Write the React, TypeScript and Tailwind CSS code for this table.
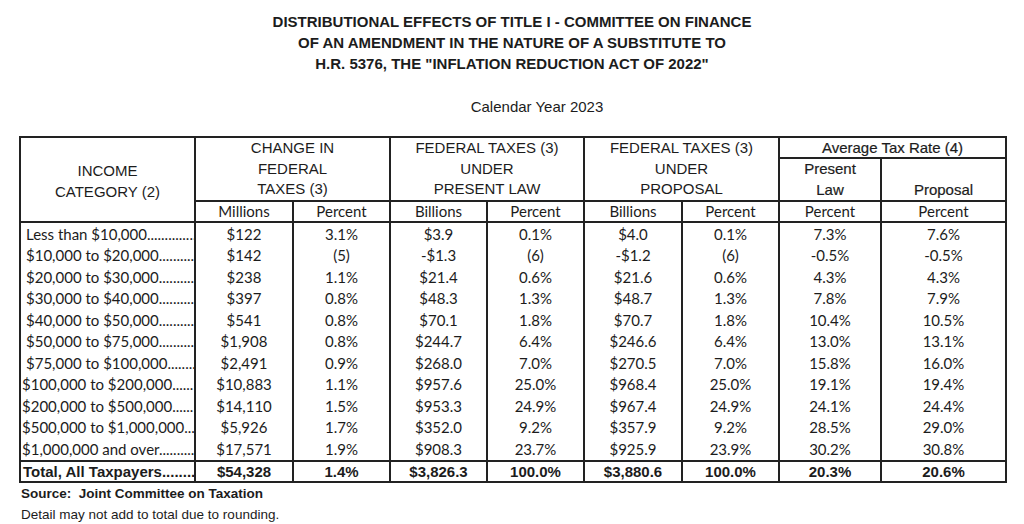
const rows = [
  { label: "Less than $10,000", pad: "pl-[5px]", v: ["$122", "3.1%", "$3.9", "0.1%", "$4.0", "0.1%", "7.3%", "7.6%"] },
  { label: "$10,000 to $20,000", pad: "pl-[5px]", v: ["$142", "(5)", "-$1.3", "(6)", "-$1.2", "(6)", "-0.5%", "-0.5%"] },
  { label: "$20,000 to $30,000", pad: "pl-[5px]", v: ["$238", "1.1%", "$21.4", "0.6%", "$21.6", "0.6%", "4.3%", "4.3%"] },
  { label: "$30,000 to $40,000", pad: "pl-[5px]", v: ["$397", "0.8%", "$48.3", "1.3%", "$48.7", "1.3%", "7.8%", "7.9%"] },
  { label: "$40,000 to $50,000", pad: "pl-[5px]", v: ["$541", "0.8%", "$70.1", "1.8%", "$70.7", "1.8%", "10.4%", "10.5%"] },
  { label: "$50,000 to $75,000", pad: "pl-[5px]", v: ["$1,908", "0.8%", "$244.7", "6.4%", "$246.6", "6.4%", "13.0%", "13.1%"] },
  { label: "$75,000 to $100,000", pad: "pl-[5px]", v: ["$2,491", "0.9%", "$268.0", "7.0%", "$270.5", "7.0%", "15.8%", "16.0%"] },
  { label: "$100,000 to $200,000", pad: "pl-[1px]", v: ["$10,883", "1.1%", "$957.6", "25.0%", "$968.4", "25.0%", "19.1%", "19.4%"] },
  { label: "$200,000 to $500,000", pad: "pl-[1px]", v: ["$14,110", "1.5%", "$953.3", "24.9%", "$967.4", "24.9%", "24.1%", "24.4%"] },
  { label: "$500,000 to $1,000,000", pad: "pl-[1px]", v: ["$5,926", "1.7%", "$352.0", "9.2%", "$357.9", "9.2%", "28.5%", "29.0%"] },
  { label: "$1,000,000 and over", pad: "pl-[1px]", v: ["$17,571", "1.9%", "$908.3", "23.7%", "$925.9", "23.9%", "30.2%", "30.8%"] },
];

const total = ["$54,328", "1.4%", "$3,826.3", "100.0%", "$3,880.6", "100.0%", "20.3%", "20.6%"];

const dots = "..............................";

export default function App() {
  return (
    <div className="w-[1024px] h-[524px] bg-white text-[#1c1c1c] overflow-hidden">
      {/* Title */}
      <div className="pt-[11px] text-center font-['Liberation_Sans',Arial,sans-serif] font-bold text-[15px] leading-[21px]">
        <div>DISTRIBUTIONAL EFFECTS OF TITLE I - COMMITTEE ON FINANCE</div>
        <div>OF AN AMENDMENT IN THE NATURE OF A SUBSTITUTE TO</div>
        <div>H.R. 5376, THE "INFLATION REDUCTION ACT OF 2022"</div>
      </div>
      <div className="mt-[23px] pl-[50px] text-center font-['Liberation_Sans',Arial,sans-serif] text-[15px] leading-[20px]">
        Calendar Year 2023
      </div>

      {/* Table */}
      <table className="mt-[19px] ml-[19px] w-[986px] table-fixed border-collapse border-2 border-[#222] text-[15px]">
        <colgroup>
          <col className="w-[175px]" />
          <col className="w-[98px]" />
          <col className="w-[97px]" />
          <col className="w-[97px]" />
          <col className="w-[97px]" />
          <col className="w-[98px]" />
          <col className="w-[97px]" />
          <col className="w-[102px]" />
          <col className="w-[125px]" />
        </colgroup>
        <thead className="font-['Liberation_Sans',Arial,sans-serif] leading-[20.5px]">
          <tr>
            <td rowSpan={3} className="border-2 border-[#222] text-center align-middle pt-[4px]">
              INCOME
              <br />
              CATEGORY (2)
            </td>
            <td rowSpan={2} colSpan={2} className="border-2 border-[#222] text-center align-top">
              CHANGE IN
              <br />
              FEDERAL
              <br />
              TAXES (3)
            </td>
            <td rowSpan={2} colSpan={2} className="border-2 border-[#222] text-center align-top">
              FEDERAL TAXES (3)
              <br />
              UNDER
              <br />
              PRESENT LAW
            </td>
            <td rowSpan={2} colSpan={2} className="border-2 border-[#222] text-center align-top">
              FEDERAL TAXES (3)
              <br />
              UNDER
              <br />
              PROPOSAL
            </td>
            <td colSpan={2} className="border-2 border-[#222] text-center align-middle leading-[19px] [-webkit-text-stroke:0.2px]">
              Average Tax Rate (4)
            </td>
          </tr>
          <tr>
            <td className="border-2 border-[#222] text-center align-top [-webkit-text-stroke:0.2px]">
              Present
              <br />
              Law
            </td>
            <td className="border-2 border-[#222] text-center align-bottom [-webkit-text-stroke:0.2px]">
              Proposal
            </td>
          </tr>
          <tr className="font-['Lato',sans-serif] leading-[19px]">
            <td className="border-x-2 border-[#222] text-center">Millions</td>
            <td className="border-x-2 border-[#222] text-center">Percent</td>
            <td className="border-x-2 border-[#222] text-center">Billions</td>
            <td className="border-x-2 border-[#222] text-center">Percent</td>
            <td className="border-x-2 border-[#222] text-center">Billions</td>
            <td className="border-x-2 border-[#222] text-center">Percent</td>
            <td className="border-x-2 border-[#222] text-center">Percent</td>
            <td className="border-x-2 border-[#222] text-center">Percent</td>
          </tr>
        </thead>
        <tbody className="font-['Lato',sans-serif]">
          {rows.map((r, i) => (
            <tr
              key={i}
              className={`${i % 2 === 0 ? "h-[22px] leading-[22px]" : "h-[21px] leading-[21px]"} ${i === 0 ? "border-t-2 border-[#222]" : ""}`}
            >
              <td className="border-x-2 border-[#222] p-0">
                <div className={`overflow-hidden whitespace-nowrap ${r.pad}`}>
                  {r.label}
                  {dots}
                </div>
              </td>
              {r.v.map((v, j) => (
                <td key={j} className="border-x-2 border-[#222] text-center p-0">
                  {v}
                </td>
              ))}
            </tr>
          ))}
          <tr className="h-[21px] leading-[19px] border-t-2 border-[#222] font-['Liberation_Sans',Arial,sans-serif] font-bold text-[15px]">
            <td className="border-2 border-[#222] p-0">
              <div className="overflow-hidden whitespace-nowrap pl-[2px]">
                Total, All Taxpayers{dots}
              </div>
            </td>
            {total.map((v, j) => (
              <td key={j} className="border-2 border-[#222] text-center p-0">
                {v}
              </td>
            ))}
          </tr>
        </tbody>
      </table>

      {/* Footnotes */}
      <div className="pl-[21px] pt-[3px] font-['Liberation_Sans',Arial,sans-serif] font-bold text-[13.5px] leading-[16px]">
        Source:&nbsp; Joint Committee on Taxation
      </div>
      <div className="pl-[21px] pt-[5px] font-['Liberation_Sans',Arial,sans-serif] text-[13.5px] leading-[16px]">
        Detail may not add to total due to rounding.
      </div>
    </div>
  );
}
